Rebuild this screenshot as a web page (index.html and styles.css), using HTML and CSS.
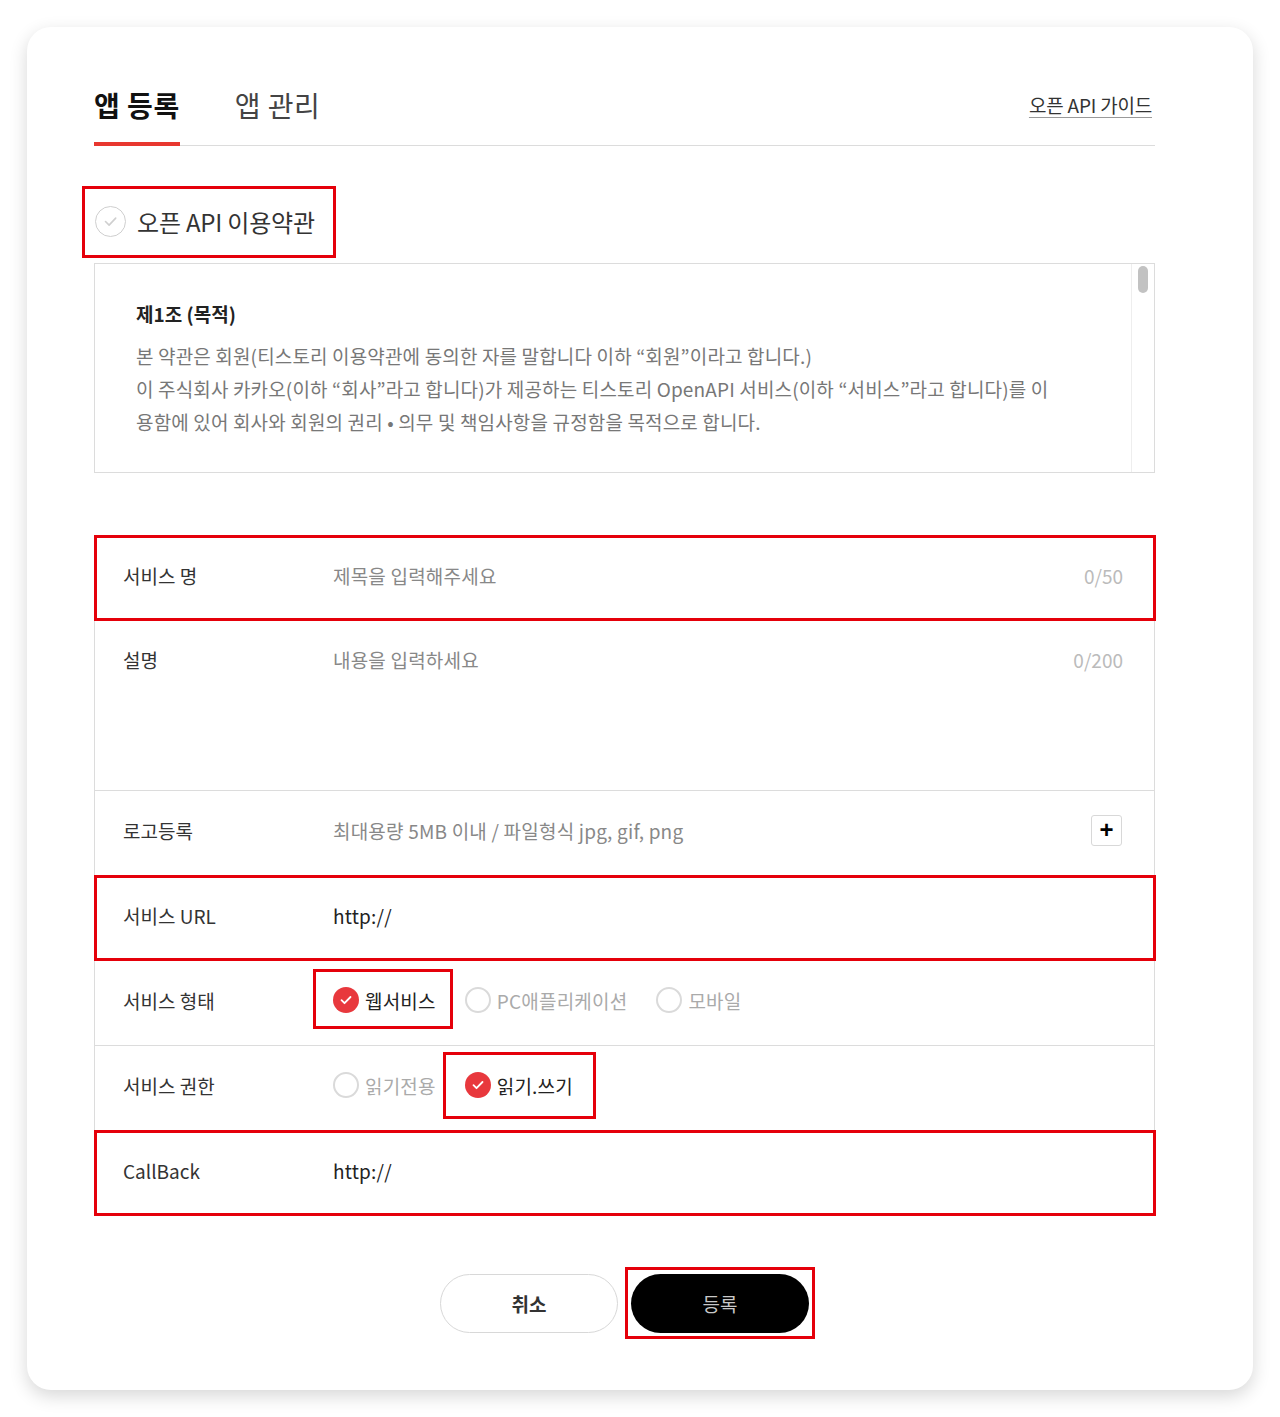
FILE: index.html
```html
<!DOCTYPE html>
<html>
<head>
    <meta charset="utf-8">
    <link rel="stylesheet" href="styles.css">
</head>
<body>
    <div class="card">
        <div class="tabs">
            <a href="#" class="tab active">앱 등록</a>
            <a href="#" class="tab">앱 관리</a>
            <a href="#" class="guide">오픈 API 가이드</a>
        </div>

        <!-- 약관 동의 -->
        <div class="terms-head mark mark-terms">
            <span class="check-circle">
                <svg width="31" height="31" viewBox="0 0 31 31"><path d="M10.5 15.5l3.6 3.6 6.6-7" fill="none" stroke="#cfcfcf" stroke-width="1.6" stroke-linecap="round" stroke-linejoin="round"/></svg>
            </span>
            <span class="terms-title">오픈 API 이용약관</span>
        </div>
        <div class="terms-box">
            <div class="terms-text">
                <strong>제1조 (목적)</strong>
                <p>본 약관은 회원(티스토리 이용약관에 동의한 자를 말합니다 이하 “회원”이라고 합니다.)<br>
                이 주식회사 카카오(이하 “회사”라고 합니다)가 제공하는 티스토리 OpenAPI 서비스(이하 “서비스”라고 합니다)를 이<br>
                용함에 있어 회사와 회원의 권리 • 의무 및 책임사항을 규정함을 목적으로 합니다.</p>
            </div>
            <div class="scrollbar"><span class="thumb"></span></div>
        </div>

        <!-- 앱 정보 입력 -->
        <div class="form">
            <div class="row mark">
                <span class="label">서비스 명</span>
                <span class="value placeholder">제목을 입력해주세요</span>
                <span class="count">0/50</span>
            </div>
            <div class="row row-tall">
                <span class="label">설명</span>
                <span class="value placeholder">내용을 입력하세요</span>
                <span class="count">0/200</span>
            </div>
            <div class="row">
                <span class="label">로고등록</span>
                <span class="value placeholder">최대용량 5MB 이내 / 파일형식 jpg, gif, png</span>
                <button class="add-button">+</button>
            </div>
            <div class="row mark">
                <span class="label">서비스 URL</span>
                <span class="value">http://</span>
            </div>
            <div class="row">
                <span class="label">서비스 형태</span>
                <div class="options">
                    <label class="option checked mark mark-web"><span class="radio"><svg width="26" height="26" viewBox="0 0 26 26"><path d="M8.5 13.2l3 3 6-6.2" fill="none" stroke="#fff" stroke-width="1.8" stroke-linecap="round" stroke-linejoin="round"/></svg></span>웹서비스</label>
                    <label class="option"><span class="radio"></span>PC애플리케이션</label>
                    <label class="option"><span class="radio"></span>모바일</label>
                </div>
            </div>
            <div class="row">
                <span class="label">서비스 권한</span>
                <div class="options">
                    <label class="option"><span class="radio"></span>읽기전용</label>
                    <label class="option checked mark mark-rw"><span class="radio"><svg width="26" height="26" viewBox="0 0 26 26"><path d="M8.5 13.2l3 3 6-6.2" fill="none" stroke="#fff" stroke-width="1.8" stroke-linecap="round" stroke-linejoin="round"/></svg></span>읽기.쓰기</label>
                </div>
            </div>
            <div class="row mark">
                <span class="label">CallBack</span>
                <span class="value">http://</span>
            </div>
        </div>

        <div class="actions">
            <button class="btn cancel">취소</button>
            <button class="btn submit mark mark-submit">등록</button>
        </div>
    </div>
</body>
</html>
```

FILE: styles.css
```css
body {
    margin: 0;
    background-color: #ffffff;
    font-family: "Noto Sans CJK KR", "Noto Sans", sans-serif;
    color: #333;
}

.card {
    margin: 27px;
    padding: 58px 98px 57px 67px;
    background-color: #fff;
    border-radius: 24px;
    box-shadow: 0 6px 18px rgba(0, 0, 0, 0.16);
}

/* tabs */
.tabs {
    display: flex;
    align-items: flex-start;
    border-bottom: 1px solid #dcdcdc;
}

.tab {
    font-size: 28px;
    line-height: 40px;
    padding-bottom: 17px;
    border-bottom: 4px solid transparent;
    margin-bottom: -1px;
    margin-right: 55px;
    text-decoration: none;
    color: #444;
    letter-spacing: 0.5px;
}

.tab.active {
    font-weight: bold;
    color: #111;
    border-bottom-color: #e8372f;
}

.guide {
    margin-left: auto;
    margin-right: 3px;
    font-size: 19px;
    line-height: 40px;
    color: #333;
    text-decoration: underline;
    text-decoration-color: #999;
    text-underline-offset: 4px;
    letter-spacing: -0.2px;
}

/* red annotation boxes */
.mark {
    position: relative;
}

.mark::after {
    content: '';
    position: absolute;
    top: -1px;
    left: -1px;
    right: -2px;
    bottom: -1px;
    border: 3px solid #e5000a;
    pointer-events: none;
}

.mark-terms::after { top: -20px; left: -13px; right: -21px; bottom: -21px; }
.mark-web::after { top: -18px; left: -20px; right: -17px; bottom: -16px; }
.mark-rw::after { top: -20px; left: -22px; right: -23px; bottom: -21px; }
.mark-submit::after { top: -7px; left: -6px; right: -6px; bottom: -6px; }

/* terms */
.terms-head {
    display: flex;
    align-items: center;
    width: max-content;
    margin-top: 60px;
    margin-left: 1px;
    height: 31px;
}

.check-circle {
    width: 31px;
    height: 31px;
    box-sizing: border-box;
    border: 1.5px solid #cfcfcf;
    border-radius: 50%;
    display: flex;
    align-items: center;
    justify-content: center;
}

.check-circle svg {
    flex: none;
}

.terms-title {
    margin-left: 11px;
    font-size: 24px;
    color: #333;
    letter-spacing: -0.2px;
}

.terms-box {
    display: flex;
    margin-top: 26px;
    height: 210px;
    box-sizing: border-box;
    border: 1px solid #dcdcdc;
}

.terms-text {
    flex: 1;
    padding: 37px 0 0 41px;
}

.terms-text strong {
    display: block;
    font-size: 19px;
    line-height: 26px;
    color: #222;
}

.terms-text p {
    margin: 12px 0 0;
    font-size: 19px;
    line-height: 33px;
    color: #777;
    letter-spacing: 0.15px;
}

.scrollbar {
    width: 22px;
    border-left: 1px solid #eee;
    padding-top: 2px;
    display: flex;
    justify-content: center;
}

.thumb {
    width: 10px;
    height: 27px;
    border-radius: 5px;
    background-color: #c2c2c2;
}

/* form */
.form {
    margin-top: 62px;
    border: 1px solid #dcdcdc;
    border-bottom: none;
}

.row {
    display: flex;
    align-items: center;
    height: 85px;
    box-sizing: border-box;
    border-bottom: 1px solid #dcdcdc;
    padding: 0 31px 6px 28px;
    font-size: 19px;
}

.row-tall {
    height: 170px;
    align-items: flex-start;
    padding-top: 25px;
}

.label {
    width: 210px;
    flex: none;
    color: #333;
}

.value {
    flex: 1;
    color: #222;
    letter-spacing: 0.2px;
}

.value.placeholder {
    color: #888;
}

.count {
    font-size: 19px;
    color: #bbb;
}

.add-button {
    width: 31px;
    height: 31px;
    margin-right: 1px;
    border: 1px solid #d8d8d8;
    border-radius: 3px;
    background-color: #fff;
    font-size: 24px;
    font-weight: bold;
    line-height: 26px;
    padding: 0;
    color: #000;
    font-family: "Liberation Sans", sans-serif;
}

.options {
    display: flex;
    align-items: center;
    gap: 29px;
}

.option {
    display: inline-flex;
    align-items: center;
    height: 26px;
    color: #aaa;
    letter-spacing: 0.2px;
}

.option.checked {
    color: #222;
}

.radio {
    width: 26px;
    height: 26px;
    box-sizing: border-box;
    border: 2px solid #dadada;
    border-radius: 50%;
    margin-right: 6px;
    display: flex;
    align-items: center;
    justify-content: center;
}

.option.checked .radio {
    border: none;
    background-color: #e8383d;
}

/* buttons */
.actions {
    display: flex;
    justify-content: center;
    gap: 13px;
    margin-top: 58px;
}

.btn {
    width: 178px;
    height: 59px;
    border-radius: 30px;
    font-family: "Noto Sans CJK KR", sans-serif;
    font-size: 19px;
    font-weight: bold;
    cursor: pointer;
}

.cancel {
    background-color: #fff;
    border: 1px solid #d8d8d8;
    color: #333;
}

.submit {
    background-color: #000;
    border: none;
    color: #c8c8c8;
    font-weight: normal;
}
```
